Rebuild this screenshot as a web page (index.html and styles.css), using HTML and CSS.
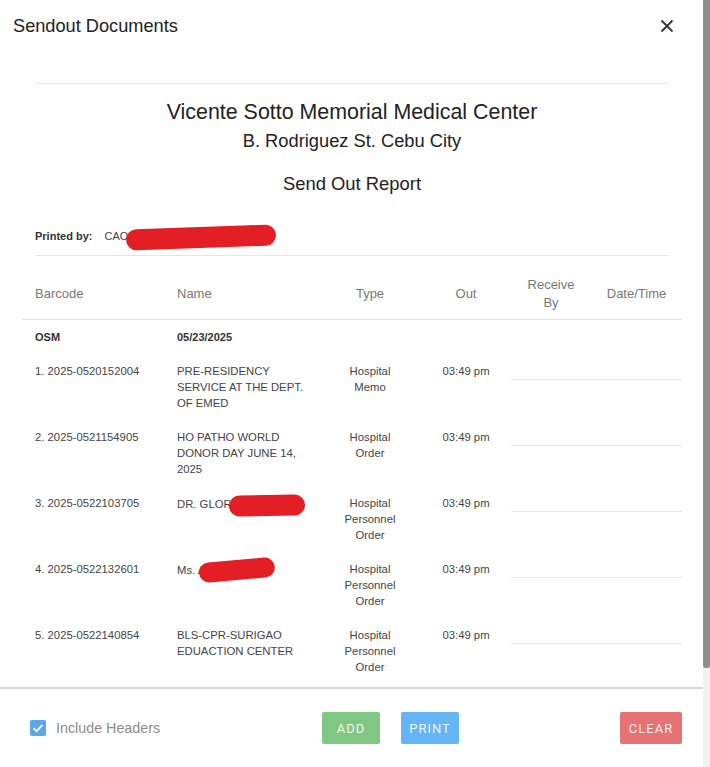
FILE: index.html
```html
<!DOCTYPE html>
<html>
<head>
<meta charset="utf-8">
<link rel="stylesheet" href="styles.css">
</head>
<body>
<div class="page">
  <div class="dialog">
    <div class="dialog-header">
      <span class="dialog-title">Sendout Documents</span>
      <svg class="close" width="14" height="14" viewBox="0 0 14 14"><path d="M1.5 1.5 L12.5 12.5 M12.5 1.5 L1.5 12.5" stroke="#333" stroke-width="1.8" fill="none"/></svg>
    </div>
    <div class="dialog-body">
      <hr class="rule rule-top">
      <div class="hosp">Vicente Sotto Memorial Medical Center</div>
      <div class="addr">B. Rodriguez St. Cebu City</div>
      <div class="report">Send Out Report</div>
      <div class="printed"><b>Printed by:</b><span class="printer">CAO<span class="redact redact-a"></span></span></div>
      <hr class="rule rule-mid">
      <table class="tbl">
        <colgroup>
          <col class="c-bar"><col class="c-name"><col class="c-type"><col class="c-out"><col class="c-recv"><col class="c-date">
        </colgroup>
        <thead>
          <tr>
            <th class="l">Barcode</th>
            <th class="l">Name</th>
            <th>Type</th>
            <th>Out</th>
            <th>Receive<br>By</th>
            <th>Date/Time</th>
          </tr>
        </thead>
        <tbody>
          <tr class="grp">
            <td>OSM</td>
            <td>05/23/2025</td>
            <td></td><td></td><td colspan="2"></td>
          </tr>
          <tr>
            <td>1. 2025-0520152004</td>
            <td class="nm">PRE-RESIDENCY SERVICE AT THE DEPT. OF EMED</td>
            <td class="ct">Hospital<br>Memo</td>
            <td class="ct">03:49 pm</td>
            <td colspan="2" class="sign"><div class="sign-line"></div></td>
          </tr>
          <tr>
            <td>2. 2025-0521154905</td>
            <td class="nm">HO PATHO WORLD DONOR DAY JUNE 14, 2025</td>
            <td class="ct">Hospital<br>Order</td>
            <td class="ct">03:49 pm</td>
            <td colspan="2" class="sign"><div class="sign-line"></div></td>
          </tr>
          <tr>
            <td>3. 2025-0522103705</td>
            <td class="nm">DR. GLOR<span class="redact redact-b"></span></td>
            <td class="ct">Hospital<br>Personnel<br>Order</td>
            <td class="ct">03:49 pm</td>
            <td colspan="2" class="sign"><div class="sign-line"></div></td>
          </tr>
          <tr>
            <td>4. 2025-0522132601</td>
            <td class="nm">Ms. A<span class="redact redact-c"></span></td>
            <td class="ct">Hospital<br>Personnel<br>Order</td>
            <td class="ct">03:49 pm</td>
            <td colspan="2" class="sign"><div class="sign-line"></div></td>
          </tr>
          <tr>
            <td>5. 2025-0522140854</td>
            <td class="nm">BLS-CPR-SURIGAO EDUACTION CENTER</td>
            <td class="ct">Hospital<br>Personnel<br>Order</td>
            <td class="ct">03:49 pm</td>
            <td colspan="2" class="sign"><div class="sign-line"></div></td>
          </tr>
        </tbody>
      </table>
    </div>
    <div class="dialog-footer">
      <label class="chk">
        <span class="box"><svg width="16" height="16" viewBox="0 0 16 16"><path d="M3.5 8.2 L6.6 11.2 L12.5 4.8" stroke="#fff" stroke-width="1.8" fill="none"/></svg></span>
        <span class="chk-label">Include Headers</span>
      </label>
      <div class="btns">
        <button class="btn btn-add">ADD</button>
        <button class="btn btn-print">PRINT</button>
      </div>
      <button class="btn btn-clear">CLEAR</button>
    </div>
  </div>
  <div class="scrollbar"><div class="thumb"></div></div>
</div>
</body>
</html>
```

FILE: styles.css
```css
html, body {
  margin: 0;
  padding: 0;
  background: #fff;
}
body {
  width: 710px;
  height: 767px;
  overflow: hidden;
  font-family: "Liberation Sans", Arial, sans-serif;
  color: #333;
}
.page {
  display: flex;
  width: 710px;
  height: 767px;
}
.dialog {
  width: 703px;
  height: 767px;
  display: flex;
  flex-direction: column;
  background: #fff;
}
.dialog-header {
  height: 52px;
  flex: none;
  display: flex;
  align-items: center;
  justify-content: space-between;
  padding: 0 29px 0 13px;
}
.dialog-title {
  font-size: 18.2px;
  color: #222;
}
.close {
  display: block;
}
.dialog-body {
  height: 635px;
  flex: none;
  overflow: hidden;
  border-bottom: 2px solid #d9d9d9;
  padding: 0 21px 0 22px;
}
.rule {
  border: 0;
  border-top: 1px solid #e6e6e6;
  margin: 0 13px;
  height: 0;
}
.rule-top {
  margin-top: 31px;
}
.hosp {
  margin-top: 16px;
  text-align: center;
  font-size: 21.4px;
  line-height: 24px;
  color: #222;
}
.addr {
  margin-top: 6px;
  text-align: center;
  font-size: 18.3px;
  line-height: 22px;
  color: #222;
}
.report {
  margin-top: 21px;
  text-align: center;
  font-size: 18.4px;
  line-height: 22px;
  color: #222;
}
.printed {
  margin-top: 32px;
  padding-left: 13px;
  font-size: 11px;
  line-height: 16px;
  color: #333;
}
.printed b {
  font-weight: bold;
}
.printer {
  margin-left: 12px;
  color: #444;
}
.rule-mid {
  margin-top: 7px;
}
.redact {
  display: inline-block;
  background: #e31e24;
  border-radius: 12px;
  vertical-align: middle;
}
.redact-a {
  width: 150px;
  height: 21px;
  margin-left: -2px;
  transform: rotate(-2deg);
}
.redact-b {
  width: 76px;
  height: 21px;
  margin-left: -3px;
  transform: rotate(-1deg);
}
.redact-c {
  width: 76px;
  height: 20px;
  margin-left: -6px;
  transform: rotate(-5deg) translateY(-1px);
}
.tbl {
  margin-top: 13px;
  width: 660px;
  table-layout: fixed;
  border-collapse: collapse;
}
.c-bar { width: 142px; }
.c-name { width: 155px; }
.c-type { width: 102px; }
.c-out { width: 90px; }
.c-recv { width: 80px; }
.c-date { width: 91px; }
.tbl th {
  font-weight: normal;
  font-size: 13px;
  line-height: 18px;
  color: #777;
  padding: 7px 0;
  text-align: center;
  vertical-align: middle;
  border-bottom: 1px solid #e3e3e3;
}
.tbl th.l {
  text-align: left;
  padding-left: 13px;
}
.tbl td {
  font-size: 11.3px;
  line-height: 16px;
  color: #444;
  padding: 9px 0 9px 13px;
  vertical-align: top;
  text-align: left;
}
.tbl td.nm {
  padding-right: 8px;
}
.tbl td.ct {
  text-align: center;
  padding-left: 0;
}
.tbl td.sign {
  padding-left: 0;
}
.sign-line {
  height: 16px;
  border-bottom: 1px solid #e6e6e6;
}
.tbl tr.grp td {
  font-weight: bold;
  font-size: 11px;
  color: #333;
}
.dialog-footer {
  flex: 1;
  display: flex;
  align-items: center;
  padding: 0 21px 0 30px;
}
.chk {
  width: 292px;
  display: flex;
  align-items: center;
}
.box {
  width: 16px;
  height: 16px;
  border-radius: 2px;
  background: #5aa7ea;
  display: block;
}
.box svg {
  display: block;
}
.chk-label {
  margin-left: 10px;
  font-size: 14.3px;
  color: #8c8c8c;
}
.btns {
  display: flex;
  gap: 21px;
}
.btn {
  border: 0;
  border-radius: 2px;
  height: 32px;
  padding: 0;
  font-family: Roboto, "Liberation Sans", sans-serif;
  font-size: 13px;
  letter-spacing: 1px;
  color: rgba(255,255,255,0.9);
}
.btn-add {
  width: 58px;
  background: #81c784;
}
.btn-print {
  width: 58px;
  background: #64b5f6;
}
.btn-clear {
  width: 62px;
  margin-left: auto;
  background: #e57373;
}
.scrollbar {
  width: 7px;
  height: 767px;
  background: #f1f1f1;
}
.thumb {
  width: 7px;
  height: 668px;
  background: #8e8e8e;
  border-radius: 0 0 3px 3px;
}
```
